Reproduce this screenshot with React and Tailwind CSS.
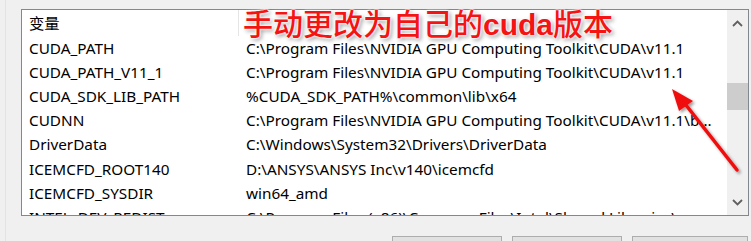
import React from 'react';

const rows = [
  ['CUDA_PATH', 'C:\\Program Files\\NVIDIA GPU Computing Toolkit\\CUDA\\v11.1'],
  ['CUDA_PATH_V11_1', 'C:\\Program Files\\NVIDIA GPU Computing Toolkit\\CUDA\\v11.1'],
  ['CUDA_SDK_LIB_PATH', '%CUDA_SDK_PATH%\\common\\lib\\x64'],
  ['CUDNN', 'C:\\Program Files\\NVIDIA GPU Computing Toolkit\\CUDA\\v11.1\\b...'],
  ['DriverData', 'C:\\Windows\\System32\\Drivers\\DriverData'],
  ['ICEMCFD_ROOT140', 'D:\\ANSYS\\ANSYS Inc\\v140\\icemcfd'],
  ['ICEMCFD_SYSDIR', 'win64_amd'],
  ['INTEL_DEV_REDIST', 'C:\\Program Files (x86)\\Common Files\\Intel\\Shared Libraries\\'],
];

const Chevron = ({ up }) => (
  <svg width="11" height="7" viewBox="0 0 11 7">
    <path
      d={up ? 'M1 6 L5.5 1.5 L10 6' : 'M1 1 L5.5 5.5 L10 1'}
      fill="none"
      stroke="#606060"
      strokeWidth="1.8"
    />
  </svg>
);

const App = () => {
  return (
    <div className="relative w-[751px] h-[241px] overflow-hidden bg-[#f0f0f0] font-['Noto_Sans','Noto_Sans_CJK_SC',sans-serif] text-[15.3px] text-black">
      <div className="flex h-full">
        <div className="w-[5px] shrink-0" />
        <div className="w-px shrink-0 bg-[#e3e3e3]" />
        <div className="flex flex-col pl-[15px] pt-[9px]">
          {/* list view */}
          <div className="flex shrink-0 w-[728px] h-[207px] border border-[#828790] bg-white overflow-hidden">
            <div className="flex-1 flex flex-col overflow-hidden">
              <div className="flex h-[26px] shrink-0 items-center">
                <div className="w-[217px] h-full pl-[7px] flex items-center border-r border-[#e5e5e5]">变量</div>
                <div className="flex-1" />
              </div>
              {rows.map(([name, value]) => (
                <div key={name} className="flex h-[24.2px] shrink-0 items-center whitespace-nowrap">
                  <div className="w-[217px] pl-[7px]">{name}</div>
                  <div className="pl-[7px]">{value}</div>
                </div>
              ))}
            </div>
            {/* scrollbar */}
            <div className="w-[21px] shrink-0 bg-[#f0f0f0] flex flex-col items-center">
              <div className="h-[26px] w-full flex items-center justify-center">
                <Chevron up />
              </div>
              <div className="h-[47px]" />
              <div className="h-[27px] w-full bg-[#cdcdcd]" />
              <div className="flex-1" />
              <div className="h-[26px] w-full flex items-center justify-center">
                <Chevron />
              </div>
            </div>
          </div>
          {/* buttons */}
          <div className="flex shrink-0 gap-[10px] pl-[371px] pt-[20px]">
            <div className="w-[110px] h-[24px] bg-[#e1e1e1] border border-[#adadad]" />
            <div className="w-[110px] h-[24px] bg-[#e1e1e1] border border-[#adadad]" />
            <div className="w-[116px] h-[24px] bg-[#e1e1e1] border border-[#adadad]" />
          </div>
        </div>
      </div>

      {/* annotation */}
      <div className="absolute left-[243px] top-[4px] whitespace-nowrap text-[30px] leading-[36px] font-medium text-[#f41414] font-['Noto_Sans_CJK_SC',sans-serif] [text-shadow:0_0_2px_#fff,0_0_2px_#fff,0_0_3px_#fff,2px_2px_4px_rgba(0,0,0,0.45)]">
        手动更改为自己的<span className="font-bold font-['Liberation_Sans','Noto_Sans_CJK_SC',sans-serif]">cuda</span>版本
      </div>
      <svg className="absolute left-0 top-0" width="751" height="241" viewBox="0 0 751 241">
        <defs>
          <filter id="sh" x="-20%" y="-20%" width="140%" height="140%">
            <feDropShadow dx="2" dy="2" stdDeviation="1.5" floodColor="#000" floodOpacity="0.4" />
          </filter>
        </defs>
        <g filter="url(#sh)">
          <line x1="737" y1="170" x2="682" y2="100" stroke="#f01010" strokeWidth="3.5" strokeLinecap="round" />
          <polygon points="672,89 693,101 679,111" fill="#f01010" />
        </g>
      </svg>
    </div>
  );
};

export default App;
